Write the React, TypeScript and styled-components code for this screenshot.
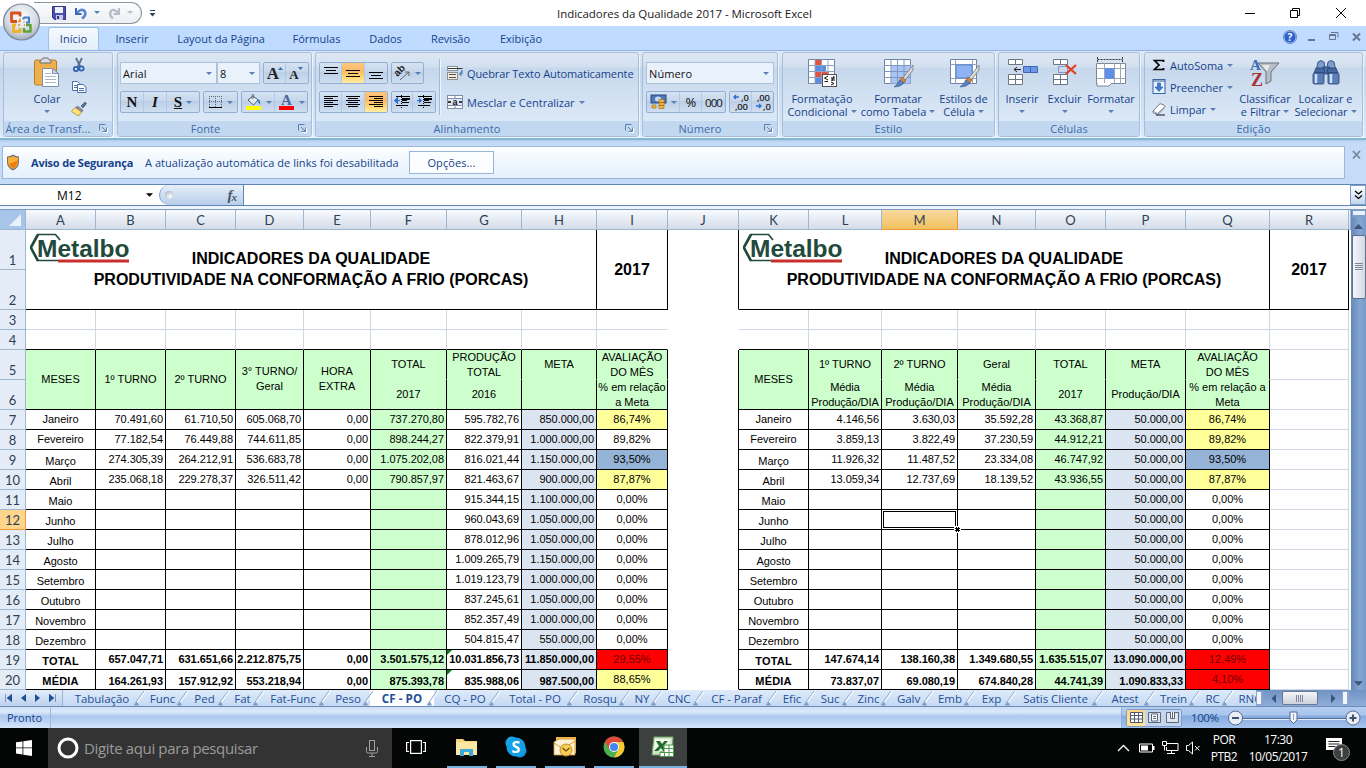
import React from 'react';
import styled, { createGlobalStyle, css } from 'styled-components';

const UI = `"Open Sans", "Noto Sans", sans-serif`;
const ARIAL = `"Liberation Sans", Arial, sans-serif`;
const SERIF = `"Liberation Serif", serif`;

const GlobalStyle = createGlobalStyle`
  * { box-sizing: border-box; }
  body { margin: 0; background: #bfdbff; overflow: hidden; }
  svg { display: block; flex: none; }
`;

const Window = styled.div`
  width: 1366px;
  height: 768px;
  display: flex;
  flex-direction: column;
  font-family: ${UI};
  font-size: 11px;
  color: #15428b;
  position: relative;
  overflow: hidden;
`;

/* ---------- title bar ---------- */
const TitleBar = styled.header`
  height: 26px;
  flex: none;
  background: #fff;
  display: flex;
  align-items: center;
  color: #1a1a1a;
`;
const QuickAccess = styled.div`
  margin-left: 34px;
  margin-top: -1px;
  width: 108px;
  height: 22px;
  border: 1px solid #8d949d;
  border-left: none;
  border-radius: 0 11px 11px 0;
  background: linear-gradient(#fbfcfd, #eceff3);
  display: flex;
  align-items: center;
  padding-left: 18px;
`;
const QaIcon = styled.div<{ $gap: number }>`
  margin-right: ${(p) => p.$gap}px;
`;
const QaMore = styled.div`
  margin-left: 7px;
  width: 12px;
`;
const TitleText = styled.div`
  margin-left: 396px;
  width: 269px;
  padding-top: 1px;
  font-size: 11.5px;
  letter-spacing: -0.05px;
  white-space: nowrap;
`;
const WindowButtons = styled.div`
  margin-left: auto;
  display: flex;
  padding-right: 19px;
  gap: 34px;
`;
const OfficeButton = styled.div`
  position: absolute;
  left: 1px;
  top: 2px;
`;

/* ---------- ribbon tabs ---------- */
const TabRow = styled.nav`
  height: 24px;
  flex: none;
  background: #bfdbff;
  display: flex;
  padding: 1px 0 0 48px;
`;
const RibbonTab = styled.div<{ $w: number; $active?: boolean }>`
  width: ${(p) => p.$w}px;
  height: 23px;
  line-height: 24px;
  text-align: center;
  white-space: nowrap;
  ${(p) =>
    p.$active &&
    css`
      margin-right: 3px;
      background: linear-gradient(#f6faff, #e3edf8);
      border: 1px solid #9ebfe8;
      border-bottom: none;
      border-radius: 3px 3px 0 0;
      line-height: 22px;
    `}
`;
const TabTools = styled.div`
  margin-left: auto;
  padding: 3px 5px 0 0;
  display: flex;
`;
const ToolSlot = styled.div<{ $w: number }>`
  width: ${(p) => p.$w}px;
`;

/* ---------- ribbon ---------- */
const Ribbon = styled.section`
  height: 90px;
  flex: none;
  display: flex;
  padding: 1px 0 0 3px;
  gap: 4px;
  border-top: 1px solid #8db2e3;
  border-bottom: 2px solid #86b5cf;
  background: linear-gradient(#dfe9f5 0, #d0dff0 16px, #c5d6eb 17px, #d9e8f8 84px, #e4f2ff 100%);
`;
const GroupBox = styled.div<{ $w: number; $ml?: number }>`
  width: ${(p) => p.$w}px;
  margin-left: ${(p) => p.$ml || 0}px;
  height: 85px;
  flex: none;
  display: flex;
  flex-direction: column;
  border: 1px solid #a3bfdc;
  border-radius: 3px;
  overflow: hidden;
  background: linear-gradient(#dee8f4 0, #d1dfef 14px, #c7d8ec 15px, #dbe8f7 68px);
  box-shadow: 1px 1px 0 rgba(255, 255, 255, 0.6);
`;
const GroupBody = styled.div`
  height: 68px;
  flex: none;
  display: flex;
`;
const GroupLabel = styled.div`
  flex: 1;
  background: #c1d8f0;
  color: #3e6aaa;
  line-height: 16px;
  text-align: center;
  position: relative;
  letter-spacing: 0.1px;
  white-space: nowrap;
`;
const LabelText = styled.span<{ $pr?: number }>`
  padding-right: ${(p) => p.$pr || 0}px;
`;
const Launcher = styled.div`
  position: absolute;
  right: 4px;
  top: 3px;
`;

const Column = styled.div<{ $pl?: number; $pt?: number; $gap?: number; $ml?: number; $w?: number }>`
  display: flex;
  flex-direction: column;
  width: ${(p) => (p.$w ? p.$w + 'px' : 'auto')};
  margin-left: ${(p) => p.$ml || 0}px;
  padding-left: ${(p) => p.$pl || 0}px;
  padding-top: ${(p) => p.$pt ?? 9}px;
  gap: ${(p) => p.$gap ?? 7}px;
`;
const Row = styled.div<{ $gap?: number }>`
  display: flex;
  align-items: center;
  gap: ${(p) => p.$gap ?? 3}px;
`;
const ButtonSet = styled.div`
  display: flex;
  height: 22px;
  border: 1px solid #94afd1;
  border-radius: 2px;
  background: linear-gradient(#d5e2f1, #c6d7eb 45%, #bccfe7 46%, #cfdff1);
`;
const Btn = styled.div<{ $w: number; $on?: boolean }>`
  width: ${(p) => p.$w}px;
  display: flex;
  align-items: center;
  justify-content: center;
  gap: 4px;
  color: #111;
  border-right: 1px solid #b3c9e3;
  &:last-child { border-right: none; }
  ${(p) => p.$on && css`background: linear-gradient(#fbc77e, #fdb964 40%, #ffd978 75%, #ffeea5);`}
`;
const Glyph = styled.span<{ $size: number; $italic?: boolean; $underline?: boolean }>`
  font: bold ${(p) => p.$size}px ${SERIF};
  font-style: ${(p) => (p.$italic ? 'italic' : 'normal')};
  text-decoration: ${(p) => (p.$underline ? 'underline' : 'none')};
  color: #111;
`;
const Combo = styled.div<{ $w: number }>`
  width: ${(p) => p.$w}px;
  height: 22px;
  background: #e9f1fb;
  border: 1px solid #abc1de;
  display: flex;
  align-items: center;
  justify-content: space-between;
  padding: 0 4px 0 2px;
  color: #111;
  letter-spacing: 0.1px;
`;
const Separator = styled.div`
  width: 2px;
  height: 56px;
  margin: 6px 0 0 3px;
  background: #9bbbe0;
  border-right: 1px solid #ecf3fb;
`;
const SmallItem = styled.div<{ $ls?: number }>`
  display: flex;
  align-items: center;
  height: 22px;
  gap: 4px;
  white-space: nowrap;
  letter-spacing: ${(p) => p.$ls ?? 0}px;
`;
const BigButton = styled.div<{ $w: number }>`
  width: ${(p) => p.$w}px;
  flex: none;
  display: flex;
  flex-direction: column;
  align-items: center;
  padding-top: 4px;
  white-space: nowrap;
`;
const BigLine = styled.div<{ $first?: boolean }>`
  display: flex;
  align-items: center;
  justify-content: center;
  gap: 3px;
  height: 13px;
  line-height: 13px;
  margin-top: ${(p) => (p.$first ? 3 : 0)}px;
`;
const NumText = styled.span<{ $size: number }>`
  font: ${(p) => p.$size}px ${UI};
  letter-spacing: -0.9px;
`;

/* ---------- message bar ---------- */
const MessageArea = styled.div`
  height: 44px;
  flex: none;
  background: linear-gradient(#b4cdec 0, #c5dbf7 3px, #c5dbf7 100%);
  padding: 6px 5px 0 2px;
  display: flex;
  justify-content: space-between;
  align-items: flex-start;
`;
const MessageBar = styled.div`
  width: 1343px;
  height: 33px;
  border: 1px solid #9bb8dc;
  background: linear-gradient(#fdfeff, #e3f0fc);
  display: flex;
  align-items: center;
  padding-left: 3px;
`;
const MessageTitle = styled.b`
  margin-left: 11px;
  width: 114px;
  letter-spacing: -0.2px;
  white-space: nowrap;
`;
const MessageText = styled.span`
  width: 264px;
  letter-spacing: 0.05px;
  white-space: nowrap;
`;
const OptionsButton = styled.div`
  width: 85px;
  height: 23px;
  border: 1px solid #9ab4d4;
  background: #fbfdff;
  text-align: center;
  line-height: 21px;
  letter-spacing: 0.1px;
`;
const MessageClose = styled.div`
  padding-top: 4px;
`;

/* ---------- formula bar ---------- */
const FormulaBar = styled.div`
  height: 22px;
  flex: none;
  border-top: 1px solid #5f84b5;
  border-bottom: 1px solid #5f84b5;
  background: #fff;
  display: flex;
  align-items: center;
`;
const NameBox = styled.div`
  width: 157px;
  display: flex;
  align-items: center;
  color: #000;
  font-size: 12px;
  padding: 0 4px 0 57px;
  justify-content: space-between;
`;
const FxPart = styled.div`
  margin-left: 2px;
  width: 85px;
  height: 20px;
  border-left: 1px solid #7d9dc6;
  border-right: 1px solid #5f84b5;
  border-radius: 10px 0 0 10px;
  background: linear-gradient(#e6eefa, #b8cdea);
  display: flex;
  align-items: center;
  justify-content: space-between;
  padding: 0 7px 0 5px;
`;
const FxDot = styled.div`
  width: 8px;
  height: 8px;
  border-radius: 4px;
  background: radial-gradient(circle at 65% 70%, #fff, #9aa8bc);
`;
const FxText = styled.span`
  font: italic bold 15px ${SERIF};
  color: #47566b;
  letter-spacing: -1px;
  sub { font-size: 11px; vertical-align: -1px; }
`;
const Expand = styled.div`
  margin-left: auto;
  width: 16px;
  height: 20px;
  border: 1px solid #7d9dc6;
  background: linear-gradient(#fff, #c2d5ef);
  display: flex;
  align-items: center;
  justify-content: center;
`;
const FormulaGap = styled.div`
  height: 4px;
  flex: none;
  background: #eef4fc;
  border-bottom: 1px solid #7d9bc0;
`;

/* ---------- sheet ---------- */
const COLS = [70, 70, 70, 68, 67, 76, 75, 75, 71, 71, 70, 73, 76, 78, 70, 80, 84, 79];
const ROWS = [40, 40, 20, 20, 30, 30, ...Array(14).fill(20)];

const SheetArea = styled.div`
  height: 480px;
  flex: none;
  display: flex;
  background: #fff;
`;
const Grid = styled.div`
  position: relative;
  width: 1351px;
  display: grid;
  grid-template-columns: 26px ${COLS.map((c) => c + 'px').join(' ')} 2px;
  grid-template-rows: 20px ${ROWS.map((r) => r + 'px').join(' ')};
  font-family: ${ARIAL};
  font-size: 11px;
  color: #000;
`;
const Corner = styled.div`
  background: #a9c4e9;
  border-right: 1px solid #9eb6ce;
  border-bottom: 1px solid #9eb6ce;
  display: flex;
  align-items: flex-end;
  justify-content: flex-end;
  padding: 0 4px 3px 0;
`;
const ColHead = styled.div<{ $on?: boolean }>`
  background: ${(p) => (p.$on ? 'linear-gradient(#f9d99f, #f1c15f)' : 'linear-gradient(#f8fafd, #d4dce9)')};
  border-right: 1px solid ${(p) => (p.$on ? '#f29536' : '#9eb6ce')};
  border-bottom: 1px solid ${(p) => (p.$on ? '#f29536' : '#9eb6ce')};
  font: 13px/21px Lato, sans-serif;
  color: #2f3f52;
  text-align: center;
  overflow: hidden;
`;
const RowHead = styled.div<{ $on?: boolean; $row: number }>`
  grid-column: 1;
  grid-row: ${(p) => p.$row};
  background: ${(p) => (p.$on ? '#ffd58d' : '#e4ecf7')};
  border-right: 1px solid ${(p) => (p.$on ? '#f29536' : '#9eb6ce')};
  border-bottom: 1px solid ${(p) => (p.$on ? '#f29536' : '#9eb6ce')};
  font: 13px/18px Lato, sans-serif;
  color: #2f3f52;
  display: flex;
  align-items: flex-end;
  justify-content: center;
`;

type CellProps = {
  $c: number; $r: number; $cs?: number; $rs?: number;
  $bg?: string; $align?: string; $bold?: boolean; $low?: boolean; $up?: boolean;
  $right?: string; $bottom?: string; $color?: string; $big?: boolean; $ls?: number;
};
const GRID = '#d0d7e5';
const Cell = styled.div<CellProps>`
  grid-column: ${(p) => p.$c + 1} / span ${(p) => p.$cs || 1};
  grid-row: ${(p) => p.$r + 1} / span ${(p) => p.$rs || 1};
  background: ${(p) => p.$bg || 'transparent'};
  border-right: 1px solid ${(p) => p.$right || '#000'};
  border-bottom: 1px solid ${(p) => p.$bottom || '#000'};
  display: flex;
  align-items: center;
  justify-content: ${(p) => (p.$align === 'right' ? 'flex-end' : 'center')};
  text-align: center;
  padding: ${(p) => (p.$low ? 3 : 0)}px ${(p) => (p.$align === 'right' ? 2 : 0)}px ${(p) => (p.$up ? 2 : 0)}px 0;
  font-weight: ${(p) => (p.$bold ? 'bold' : 'normal')};
  font-size: ${(p) => (p.$big ? 16 : 11)}px;
  line-height: ${(p) => (p.$big ? 21 : 15)}px;
  color: ${(p) => p.$color || '#000'};
  letter-spacing: ${(p) => p.$ls || 0}px;
  white-space: pre;
  min-width: 0;
  position: relative;
`;
const ErrorMark = styled.i`
  position: absolute;
  left: 0;
  top: 0;
  border-top: 5px solid #0a7a1e;
  border-right: 5px solid transparent;
`;
const Logo = styled.div`
  position: absolute;
  left: 4px;
  top: 3px;
`;
const Selection = styled.div`
  grid-column: 14;
  grid-row: 13;
  position: relative;
  margin: 1px 2px 2px 1px;
  border: 1px solid #000;
`;
const Handle = styled.i`
  position: absolute;
  right: -5px;
  bottom: -5px;
  width: 5px;
  height: 5px;
  background: #000;
  border: 1px dotted #fff;
  outline: 1px solid #fff;
`;
const VScroll = styled.div`
  width: 15px;
  background: linear-gradient(90deg, #6488b9, #86a6d2 60%, #7799c9);
  display: flex;
  flex-direction: column;
  align-items: center;
  padding-bottom: 4px;
`;
const SplitBox = styled.div`
  width: 14px;
  height: 7px;
  border: 1px solid #7d9dc6;
  background: #e8f0fb;
  margin-bottom: 7px;
  border-bottom-width: 2px;
`;
const VThumb = styled.div`
  width: 14px;
  height: 64px;
  margin: 6px 0 auto;
  border: 1px solid #5f6f8c;
  border-radius: 2px;
  background: linear-gradient(90deg, #f4f6f9, #d5dae2);
  display: flex;
  align-items: center;
  justify-content: center;
`;

/* ---------- sheet tabs ---------- */
const SheetTabs = styled.div`
  height: 17px;
  flex: none;
  display: flex;
  background: linear-gradient(#e3edf9, #bdd1ec);
  border-bottom: 1px solid #6d8db9;
`;
const TabNav = styled.div`
  width: 63px;
  flex: none;
  display: flex;
  justify-content: space-around;
  align-items: center;
  padding: 0 2px 0 1px;
  border-right: 1px solid #9bb5d8;
`;
const TabStrip = styled.div`
  width: 1193px;
  flex: none;
  display: flex;
  overflow: hidden;
`;
const SheetTab = styled.div<{ $w: number; $on?: boolean }>`
  width: ${(p) => p.$w}px;
  flex: none;
  height: 16px;
  line-height: 17px;
  font-size: 11.5px;
  text-align: center;
  white-space: nowrap;
  position: relative;
  color: #1f4f97;
  font-weight: ${(p) => (p.$on ? 'bold' : 'normal')};
  letter-spacing: ${(p) => (p.$on ? 0.1 : -0.05)}px;
  background: ${(p) => (p.$on ? '#fff' : 'linear-gradient(#deebfa, #c4d9f3)')};
  svg { position: absolute; right: -7px; top: 0; z-index: 1; }
`;
const HScroll = styled.div`
  flex: 1;
  display: flex;
  align-items: center;
  background: linear-gradient(#7093c4, #8fadd8);
`;
const HSplit = styled.div`
  width: 7px;
  height: 14px;
  background: #f2f7fd;
  border: 1px solid #8aa6cf;
  border-right-width: 2px;
`;
const HThumb = styled.div`
  width: 36px;
  height: 14px;
  margin-right: 13px;
  border: 1px solid #6a7890;
  border-radius: 2px;
  background: linear-gradient(#f4f6f9, #ccd2dc);
  display: flex;
  align-items: center;
  justify-content: center;
`;

/* ---------- status bar ---------- */
const StatusBar = styled.div`
  height: 21px;
  flex: none;
  display: flex;
  align-items: center;
  background: linear-gradient(#cfe0f6 0, #dbe9fb 5px, #adc8ec 9px, #b9d3f4 14px, #d6e6fa);
`;
const Ready = styled.div`
  width: 51px;
  height: 20px;
  line-height: 19px;
  padding-left: 7px;
  border-right: 1px solid #9bb8de;
`;
const StatusRight = styled.div`
  margin-left: auto;
  width: 245px;
  height: 21px;
  display: flex;
  align-items: center;
  border-left: 1px solid #8fb0dc;
  padding-left: 4px;
  background: linear-gradient(#b4cdf0 0, #a9c5ec 8px, #86abdf 9px, #a5c4ee);
`;
const ViewSet = styled.div`
  display: flex;
  height: 18px;
  border: 1px solid #7f9cc7;
  border-radius: 2px;
`;
const ViewBtn = styled.div<{ $on?: boolean }>`
  width: 18px;
  display: flex;
  align-items: center;
  justify-content: center;
  background: ${(p) => (p.$on ? 'linear-gradient(#ffd48a, #ffe79b)' : '#c3d6ef')};
`;
const ZoomText = styled.span`
  width: 28px;
  margin: 0 8px 0 9px;
  font-size: 11.5px;
  letter-spacing: -0.4px;
`;

/* ---------- task bar ---------- */
const TaskBar = styled.footer`
  height: 40px;
  flex: none;
  background: #040605;
  display: flex;
  color: #fff;
`;
const StartButton = styled.div`
  width: 48px;
  display: flex;
  align-items: center;
  justify-content: center;
`;
const Search = styled.div`
  width: 344px;
  background: #333;
  display: flex;
  align-items: center;
  padding: 0 14px 0 9px;
  color: #9b9b9b;
  font-size: 15px;
`;
const SearchText = styled.span`
  margin: 0 auto 0 5px;
  letter-spacing: -0.36px;
  white-space: nowrap;
`;
const TaskItem = styled.div<{ $w: number; $open?: boolean; $active?: boolean; $ml?: number }>`
  width: ${(p) => p.$w}px;
  margin-left: ${(p) => p.$ml || 0}px;
  display: flex;
  align-items: center;
  justify-content: center;
  border-bottom: 2px solid ${(p) => (p.$open ? '#76b2e4' : 'transparent')};
  background: ${(p) => (p.$active ? '#3c413f' : 'transparent')};
`;
const Tray = styled.div`
  margin-left: auto;
  display: flex;
  align-items: center;
  font-size: 12px;
  line-height: 17px;
  text-align: center;
`;
const TrayIcon = styled.div<{ $w: number }>`
  width: ${(p) => p.$w}px;
`;
const TrayText = styled.div<{ $w: number }>`
  width: ${(p) => p.$w}px;
  letter-spacing: -0.5px;
  white-space: pre;
`;
const Notice = styled.div`
  width: 43px;
  margin-left: 6px;
  padding-left: 2px;
`;

/* ---------- small drawings ---------- */
const Down = ({ c = '#5b7fb5', w = 6 }: { c?: string; w?: number }) => (
  <svg width={w} height={Math.ceil(w / 2)} viewBox="0 0 6 3"><path d="M0 0h6L3 3z" fill={c} /></svg>
);
const Lines = ({ rows }: { rows: [number, number, number][] }) => (
  <svg width="16" height="16" shapeRendering="crispEdges">
    {rows.map(([x, y, w], i) => <rect key={i} x={x} y={y} width={w} height="1" fill="#000" />)}
  </svg>
);
const LaunchIcon = () => (
  <svg width="9" height="9" fill="none" stroke="#5f7fab">
    <path d="M.5 6.500v-6h6" /><path d="M3 3l4 4M7.500 3.500v4h-4" /><path d="M4 8.500h4.500v-4.500" stroke="#fff" />
  </svg>
);
const PasteIcon = () => (
  <svg width="32" height="32">
    <rect x="3.500" y="3" width="22" height="25" rx="2" fill="#eeb04c" stroke="#b67c2a" />
    <path d="M9 6h11v-2q-2-1-3-3h-5q-1 2-3 3z" fill="#d7dbe0" stroke="#6b6f76" />
    <path d="M11.500 11.500h10l6 5v13h-16z" fill="#fff" stroke="#7c8fae" />
    <path d="M21.500 11.500v5h6z" fill="#cfdcee" stroke="#7c8fae" />
    <path d="M14 16.500h6M14 19.500h11M14 22.500h11M14 25.500h11" stroke="#a9b7cc" />
  </svg>
);
const CutIcon = () => (
  <svg width="16" height="16" fill="none">
    <path d="M5 1l4.500 9M11 1L6.500 10" stroke="#56708f" strokeWidth="1.800" />
    <circle cx="5" cy="12" r="2.200" stroke="#2c5fae" strokeWidth="1.700" /><circle cx="10.500" cy="11.500" r="2.200" stroke="#2c5fae" strokeWidth="1.700" />
  </svg>
);
const CopyIcon = () => (
  <svg width="16" height="16" stroke="#4a6ea9">
    <path d="M1.500 2.500h5l3 2.500v6.500h-8z" fill="#fff" /><path d="M3 6.500h4M3 8.500h4" />
    <path d="M6.500 5.500h5.500l3 2.500v5.500h-8.500z" fill="#fff" /><path d="M8 9.500h5M8 11.500h5" />
  </svg>
);
const BrushIcon = () => (
  <svg width="16" height="16">
    <path d="M10 5l4-4 1.500 1.500-3.500 4.500z" fill="#5d6e96" stroke="#3e4c70" strokeWidth=".6" />
    <path d="M6.500 5l5.500 4-1 2-7-4z" fill="#8d8aa8" stroke="#5c5a78" strokeWidth=".5" />
    <path d="M4 6.500l6.500 4.500-3 4-7-4.500z" fill="#ffe27a" stroke="#b08a2a" strokeWidth=".8" />
  </svg>
);
const BorderIcon = () => (
  <svg width="14" height="14" shapeRendering="crispEdges">
    <path d="M.5 1v11M6.500 1v11M12.500 1v11M0 1.500h13M0 6.500h13" stroke="#5c6b80" strokeDasharray="1 1" /><rect y="12" width="13" height="1" fill="#000" />
  </svg>
);
const FillIcon = () => (
  <svg width="17" height="16">
    <path d="M3 6l5-4 5 4-4.500 5z" fill="#e8edf4" stroke="#4b586d" /><path d="M7 5V1.500q0-1.500 1.500-1v4" fill="none" stroke="#6b7789" />
    <path d="M12 5q4 0 3 6l-2-3z" fill="#3d76c9" /><rect x="1" y="12" width="15" height="4" fill="#ff0" />
  </svg>
);
const FontColorIcon = () => (
  <svg width="17" height="16">
    <text x="8.500" y="11" textAnchor="middle" fontFamily="Liberation Serif" fontWeight="bold" fontSize="15" fill="#44689c">A</text>
    <rect x="1" y="12" width="15" height="4" fill="#f00" />
  </svg>
);
const GrowIcon = ({ s, up }: { s: number; up?: boolean }) => (
  <svg width="18" height="18">
    <text x={up ? 7 : 6} y="15" textAnchor="middle" fontFamily="Liberation Serif" fontWeight="bold" fontSize={s} fill="#222">A</text>
    <path d={up ? 'M12 6h5l-2.500-3z' : 'M10 3h5l-2.500 3z'} fill="#3f6cb4" />
  </svg>
);
const OrientIcon = () => (
  <svg width="17" height="17">
    <text transform="translate(5 12) rotate(-45)" x="-1" y="-1" fontFamily="Liberation Sans" fontWeight="bold" fontSize="10" fill="#222">ab</text>
    <path d="M6 15L15 7M11 7h4v4" fill="none" stroke="#666" />
  </svg>
);
const IndentIcon = ({ flip }: { flip?: boolean }) => (
  <svg width="17" height="16" shapeRendering="crispEdges">
    <path d={flip ? 'M1 6h3M3 4l2 2.500-2 2.500z' : 'M3 6h3M3 4l-2 2.500 2 2.500z'} stroke="#2f6fd0" fill="#2f6fd0" />
    <path d="M2 2.500h14M8 4.500h8M8 6.500h5M8 8.500h7M2 11.500h5M8 11.500h6" stroke="#000" /><path d="M8 4h8v2H8z" /><path d="M7.500 1v13" stroke="#000" strokeDasharray="1 1" />
  </svg>
);
const WrapIcon = () => (
  <svg width="16" height="16">
    <rect x=".5" y="1.500" width="10" height="4" fill="#fff" stroke="#8b8f96" /><path d="M1 3.500h14.500" stroke="#333" />
    <rect x=".5" y="7.500" width="10" height="7" fill="#f4ead8" stroke="#8b8f96" /><path d="M2 9.500h7M2 12.500h7" stroke="#555" />
    <path d="M15 5v4h-2M14.500 6.500l-2 2.500 2 2" fill="none" stroke="#3d6aae" />
  </svg>
);
const MergeIcon = () => (
  <svg width="16" height="16">
    <rect x=".5" y="1.500" width="15" height="13" fill="#fff" stroke="#7d8ea8" /><path d="M.5 4.500h15M.5 11.500h15M8 1.500v3M8 11.500v3" stroke="#7d8ea8" />
    <rect x="1" y="5" width="14" height="6" fill="#dce8f8" /><path d="M1 8h3M12 8h3" stroke="#000" strokeWidth="1.500" />
    <text x="8" y="10.500" textAnchor="middle" fontFamily="Liberation Sans" fontWeight="bold" fontSize="9" fill="#111">a</text>
  </svg>
);
const CurrencyIcon = () => (
  <svg width="17" height="16">
    <rect x="1" y="1" width="15" height="8" fill="#4f78b8" stroke="#27487f" /><ellipse cx="8" cy="5" rx="3" ry="2.500" fill="#c7d9f2" />
    <path d="M2 11h4v3H2zM9 5.500h5v9H9z" fill="#efb83c" stroke="#a8741b" strokeWidth=".7" /><path d="M9 8.500h5M9 11.500h5" stroke="#a8741b" />
  </svg>
);
const DecimalIcon = ({ less }: { less?: boolean }) => (
  <svg width="18" height="18" fontFamily="Open Sans" fontSize="9.500" fontWeight="600" fill="#222">
    {less ? <><text x="3" y="8" textLength="13">,00</text><text x="9" y="17">,0</text><path d="M2 13h5M5 11l2 2-2 2" stroke="#2f6fd0" fill="none" strokeWidth="1.400" /></>
      : <><text x="9" y="8">,0</text><text x="3" y="17" textLength="13">,00</text><path d="M2 4h5M4 2L2 4l2 2" stroke="#2f6fd0" fill="none" strokeWidth="1.400" /></>}
  </svg>
);
const CondIcon = () => (
  <svg width="32" height="32">
    <path d="M2.500 2.500h26v24h-26z" fill="#fff" stroke="#6f86a8" />
    <path d="M9 3h6v5H9zM9 14h14v6H9z" fill="#e4513f" /><path d="M9 8h11v6H9zM9 20h6v6H9z" fill="#5b8ce4" />
    <path d="M2.500 8.500h26M2.500 14.500h26M2.500 20.500h26M9 2.500v24M15.500 2.500v24M22 2.500v24" stroke="#8fa3c0" fill="none" />
    <rect x="16.500" y="17.500" width="14" height="12" fill="#fff" stroke="#555" />
    <path d="M22 19l-3.500 2 3.500 2M18.500 24.500H22M25 21h4M25 23h4M28 19l-2 5M25 25l3 1.500-3 1.500" fill="none" stroke="#111" />
  </svg>
);
const BrushArm = () => (
  <>
    <path d="M31 8L20 22l2.500 2L31 13z" fill="#d9d9d9" stroke="#777" strokeWidth=".8" />
    <path d="M20 20l4 3-2 3-5-2z" fill="#c98748" stroke="#84531f" strokeWidth=".6" /><path d="M18 23l4 3q-3 4-10 4 3-2 6-7z" fill="#5a82c0" stroke="#3b5f9a" strokeWidth=".6" />
  </>
);
const TableIcon = () => (
  <svg width="32" height="32">
    <path d="M2.500 2.500h26v24h-26z" fill="#fff" stroke="#6f86a8" /><path d="M9 8.500h19.500v18H9z" fill="#a9c5f5" />
    <path d="M2.500 8.500h26M2.500 14.500h26M2.500 20.500h26M9 2.500v24M15.500 2.500v24M22 2.500v24" stroke="#7d97bf" fill="none" /><BrushArm />
  </svg>
);
const StylesIcon = () => (
  <svg width="32" height="32">
    <path d="M2.500 2.500h26v24h-26z" fill="#fff" stroke="#6f86a8" /><path d="M2.500 7.500h26M2.500 21.500h26M7.500 2.500v24M24.500 2.500v24" stroke="#8fa3c0" fill="none" />
    <rect x="8" y="8" width="16" height="13" fill="#8fb4f3" stroke="#5b83c9" /><BrushArm />
  </svg>
);
const Block = ({ x, y }: { x: number; y: number }) => (
  <g transform={`translate(${x} ${y})`}><path d="M.5.500h14v10H.5zM.5 5.500h14M7.500.500v10" fill="#fff" stroke="#6d7685" /></g>
);
const InsertIcon = () => (
  <svg width="32" height="32">
    <path d="M2.500 2.500h14v5h-14z" fill="#fff" stroke="#6d7685" /><path d="M9.500 2.500v5" stroke="#6d7685" /><Block x={2} y={17} />
    <path d="M17.500 9.500h14v6h-14z" fill="#6b97e6" stroke="#3e67ad" /><path d="M24.500 9.500v6" stroke="#3e67ad" /><path d="M8 12.500h7M11 10l-3 2.500 3 2.500" stroke="#222" fill="none" />
  </svg>
);
const DeleteIcon = () => (
  <svg width="32" height="32">
    <path d="M4.500 2.500h14v5h-14z" fill="#fff" stroke="#6d7685" /><path d="M11.500 2.500v5" stroke="#6d7685" /><Block x={4} y={17} />
    <path d="M9.500 9.500h9v6h-9z" fill="none" stroke="#355a9c" strokeDasharray="1 1" /><path d="M17 8l10 9M27 8l-10 9" stroke="#e23b23" strokeWidth="2.200" />
  </svg>
);
const FormatIcon = () => (
  <svg width="32" height="32">
    <path d="M2.500 2.500h25M2.500 0v5M27.500 0v5" stroke="#333" strokeDasharray="2 1" fill="none" />
    <path d="M1.500 6.500h29v20h-29z" fill="#fff" stroke="#7c8798" /><path d="M1.500 11.500h29M1.500 21.500h29M9.500 6.500v20M19.500 6.500v20M25.500 6.500v20" stroke="#9aa5b6" fill="none" />
    <rect x="10" y="11" width="9" height="11" fill="#5f8fe6" /><path d="M2 26v3h12l3-3" fill="#fff" stroke="#7c8798" />
  </svg>
);
const SumIcon = () => (
  <svg width="14" height="14"><path d="M11.500 4V2.500H2.500l4.500 4.500-4.500 4.500h9V10" fill="none" stroke="#000" strokeWidth="1.700" /></svg>
);
const FillDownIcon = () => (
  <svg width="14" height="16"><rect x="1" y=".500" width="12" height="14" fill="#eaf2fd" stroke="#34619f" /><path d="M1 2h12" stroke="#34619f" /><path d="M5.500 4h3v4H11l-4 4.500L3 8h2.500z" fill="#3b7bdc" stroke="#2457a8" strokeWidth=".6" /></svg>
);
const EraserIcon = () => (
  <svg width="14" height="14"><path d="M1 9l6-6.500q1-1 2.500-.5l3 1.500q1 1 0 2L7 11.500q-1 1-2.500.5L1.500 11q-1-1-.5-2z" fill="#fff" stroke="#6b7688" /><path d="M1 9l4.500 2.500L12.500 5" fill="none" stroke="#8c97a8" /><path d="M4 13h9" stroke="#111" /></svg>
);
const SortIcon = () => (
  <svg width="32" height="32" fontFamily="Liberation Serif" fontWeight="bold">
    <path d="M9 6h21l-8 9v9l-5 3V15z" fill="#b9bdc4" stroke="#6c7078" /><path d="M13 8h8l-3 6z" fill="#e6e8eb" />
    <text x="1" y="13" fontSize="15" fill="#3d6bb5">A</text><text x="2" y="29" fontSize="18" fill="#a83232">Z</text>
  </svg>
);
const FindIcon = () => (
  <svg width="32" height="32" stroke="#24416f" strokeWidth=".8">
    <path d="M8 5q3-3 6 0l1 5-9 4z" fill="#7d9dcc" /><path d="M18 5q3-3 6 0l2 9-9-4z" fill="#7d9dcc" /><rect x="13" y="10" width="6" height="7" fill="#4f73ad" />
    <path d="M6 11h8l1 5H4z" fill="#45689f" /><path d="M18 11h8l2 5H17z" fill="#45689f" />
    <rect x="3" y="16" width="11" height="11" rx="1.500" fill="#5a7fba" /><rect x="18" y="16" width="11" height="11" rx="1.500" fill="#5a7fba" />
    <path d="M6 17v9M21 17v9" stroke="#cfdff5" strokeWidth="2.500" />
  </svg>
);
const OfficeIcon = () => (
  <svg width="40" height="40">
    <defs><radialGradient id="orb" cx=".5" cy=".35" r=".65"><stop offset="0" stopColor="#fdfdfe" /><stop offset=".65" stopColor="#d5dbe3" /><stop offset="1" stopColor="#a3adbb" /></radialGradient></defs>
    <circle cx="20.500" cy="20" r="18" fill="url(#orb)" stroke="#7b8798" strokeWidth="1.200" />
    <g fill="none" strokeWidth="2.800" strokeLinejoin="round">
      <path d="M19 14.500V11h-8.500v8.500H16" stroke="#d9501e" /><path d="M22.500 15.500h5.500v5h-3M22.500 15.500v2" stroke="#3d7cc9" strokeWidth="2" />
      <path d="M15 23h-2.500v6.500H19V26" stroke="#f0b323" /><path d="M25 23h4.500v6.500H23V26" stroke="#5da03a" strokeWidth="2.400" />
      <path d="M17 19.500h2v-3M19 23h-2M23 20.500v-1M23 23h1" stroke="#e8862a" strokeWidth="1.600" />
    </g>
  </svg>
);
const MetalboLogo = () => (
  <svg width="102" height="32">
    <path d="M30 7L25.500 1.500H8L.8 14.500 8 27.500h20" fill="none" stroke="#1f4a3c" strokeWidth="1.700" />
    <path d="M8 1.500L.8 14.500 8 28" fill="none" stroke="#1f4a3c" strokeWidth="2.600" />
    <text x="7" y="23.500" fontFamily="Liberation Sans" fontWeight="bold" fontSize="24" fill="#1f4a3c" textLength="92.500" lengthAdjust="spacingAndGlyphs">Metalbo</text>
    <rect x="28" y="26.500" width="71" height="3" fill="#c8312b" />
  </svg>
);

/* ---------- sheet data ---------- */
const GREEN = '#ccffcc', BLUE = '#dbe5f1', YELLOW = '#ffff99', STEEL = '#95b3d7', RED = '#ff0000';
const months = ['Janeiro', 'Fevereiro', 'Março', 'Abril', 'Maio', 'Junho', 'Julho', 'Agosto', 'Setembro', 'Outubro', 'Novembro', 'Dezembro', 'TOTAL', 'MÉDIA'];
const left: string[][] = [
  ['70.491,60', '61.710,50', '605.068,70', '0,00', '737.270,80', '595.782,76', '850.000,00', '86,74%'],
  ['77.182,54', '76.449,88', '744.611,85', '0,00', '898.244,27', '822.379,91', '1.000.000,00', '89,82%'],
  ['274.305,39', '264.212,91', '536.683,78', '0,00', '1.075.202,08', '816.021,44', '1.150.000,00', '93,50%'],
  ['235.068,18', '229.278,37', '326.511,42', '0,00', '790.857,97', '821.463,67', '900.000,00', '87,87%'],
  ['', '', '', '', '', '915.344,15', '1.100.000,00', '0,00%'],
  ['', '', '', '', '', '960.043,69', '1.050.000,00', '0,00%'],
  ['', '', '', '', '', '878.012,96', '1.050.000,00', '0,00%'],
  ['', '', '', '', '', '1.009.265,79', '1.150.000,00', '0,00%'],
  ['', '', '', '', '', '1.019.123,79', '1.000.000,00', '0,00%'],
  ['', '', '', '', '', '837.245,61', '1.050.000,00', '0,00%'],
  ['', '', '', '', '', '852.357,49', '1.000.000,00', '0,00%'],
  ['', '', '', '', '', '504.815,47', '550.000,00', '0,00%'],
  ['657.047,71', '631.651,66', '2.212.875,75', '0,00', '3.501.575,12', '10.031.856,73', '11.850.000,00', '29,55%'],
  ['164.261,93', '157.912,92', '553.218,94', '0,00', '875.393,78', '835.988,06', '987.500,00', '88,65%'],
];
const blankRight = ['', '', '', '', '50.000,00', '0,00%'];
const right: string[][] = [
  ['4.146,56', '3.630,03', '35.592,28', '43.368,87', '50.000,00', '86,74%'],
  ['3.859,13', '3.822,49', '37.230,59', '44.912,21', '50.000,00', '89,82%'],
  ['11.926,32', '11.487,52', '23.334,08', '46.747,92', '50.000,00', '93,50%'],
  ['13.059,34', '12.737,69', '18.139,52', '43.936,55', '50.000,00', '87,87%'],
  ...Array(8).fill(blankRight),
  ['147.674,14', '138.160,38', '1.349.680,55', '1.635.515,07', '13.090.000,00', '12,49%'],
  ['73.837,07', '69.080,19', '674.840,28', '44.741,39', '1.090.833,33', '4,10%'],
];
const leftPct = [YELLOW, '', STEEL, YELLOW, '', '', '', '', '', '', '', '', RED, YELLOW];
const rightPct = [YELLOW, YELLOW, STEEL, YELLOW, '', '', '', '', '', '', '', '', RED, RED];

function DataBlock({ start, rows, green, blue, pct }: { start: number; rows: string[][]; green: number; blue: number; pct: string[] }) {
  return (
    <>
      {rows.map((row, i) => (
        <React.Fragment key={i}>
          <Cell $c={start} $r={7 + i} $low={i > 1} $bold={i > 11} $ls={i > 11 ? 0.2 : 0}>{months[i]}</Cell>
          {row.map((v, j) => {
            const last = j === row.length - 1;
            return (
              <Cell
                key={j}
                $c={start + 1 + j}
                $r={7 + i}
                $align={last ? 'center' : 'right'}
                $bold={!last && i > 11}
                $low={!last && i === 13}
                $bg={last ? pct[i] : j === green ? GREEN : j === blue ? BLUE : ''}
                $color={last && pct[i] === RED ? '#6e0000' : '#000'}
                $ls={last ? 0 : -0.05}
              >
                {start === 1 && j === 5 && i > 11 && <ErrorMark />}
                {v}
              </Cell>
            );
          })}
        </React.Fragment>
      ))}
    </>
  );
}

const title = 'INDICADORES DA QUALIDADE\nPRODUTIVIDADE NA CONFORMAÇÃO A FRIO (PORCAS)';
const gridCols = [1, 2, 3, 4, 5, 6, 7, 8, 9, 11, 12, 13, 14, 15, 16, 17, 18];

function Sheet() {
  return (
    <Grid>
      <Corner><svg width="12" height="12"><path d="M12 0v12H0z" fill="#e9f1fb" /></svg></Corner>
      {'ABCDEFGHIJKLMNOPQR'.split('').map((l) => <ColHead key={l} $on={l === 'M'}>{l}</ColHead>)}
      <ColHead />
      {ROWS.map((_, i) => <RowHead key={i} $on={i === 11} $row={i + 2}>{i + 1}</RowHead>)}

      <Cell $c={1} $r={1} $cs={8} $rs={2} $bold $big $up>{title}<Logo><MetalboLogo /></Logo></Cell>
      <Cell $c={9} $r={1} $rs={2} $bold $big>2017</Cell>
      <Cell $c={10} $r={1} $rs={2} $bottom="transparent" />
      <Cell $c={11} $r={1} $cs={7} $rs={2} $bold $big $up>{title}<Logo><MetalboLogo /></Logo></Cell>
      <Cell $c={18} $r={1} $rs={2} $bold $big>2017</Cell>

      {[3, 4].map((r) => gridCols.map((c) => (
        <Cell key={`${r}-${c}`} $c={c} $r={r} $right={c === 9 ? 'transparent' : GRID} $bottom={r === 4 && c !== 18 ? '#000' : GRID} />
      )))}
      <Cell $c={10} $r={5} $rs={16} $bottom="transparent" />
      {ROWS.slice(4).map((_, i) => <Cell key={i} $c={18} $r={5 + i} $right={GRID} $bottom={GRID} />)}

      <Cell $c={1} $r={5} $rs={2} $bg={GREEN}>MESES</Cell>
      <Cell $c={2} $r={5} $rs={2} $bg={GREEN}>1º TURNO</Cell>
      <Cell $c={3} $r={5} $rs={2} $bg={GREEN}>2º TURNO</Cell>
      <Cell $c={4} $r={5} $rs={2} $bg={GREEN} $up>{'3° TURNO/\nGeral'}</Cell>
      <Cell $c={5} $r={5} $rs={2} $bg={GREEN} $up>{'HORA\nEXTRA'}</Cell>
      {[[6, 'TOTAL', '2017'], [7, 'PRODUÇÃO\nTOTAL', '2016'], [8, 'META', ''], [9, 'AVALIAÇÃO\nDO MÊS', '% em relação\na Meta'],
        [12, '1º TURNO', 'Média\nProdução/DIA'], [13, '2º TURNO', 'Média\nProdução/DIA'], [14, 'Geral', 'Média\nProdução/DIA'],
        [15, 'TOTAL', '2017'], [16, 'META', 'Produção/DIA'], [17, 'AVALIAÇÃO\nDO MÊS', '% em relação a\nMeta']].map(([c, a, b]) => (
        <React.Fragment key={c}>
          <Cell $c={c as number} $r={5} $bg={GREEN} $bottom={GREEN}>{a}</Cell>
          <Cell $c={c as number} $r={6} $bg={GREEN} $ls={c === 12 ? -0.1 : 0}>{b}</Cell>
        </React.Fragment>
      ))}
      <Cell $c={11} $r={5} $rs={2} $bg={GREEN}>MESES</Cell>

      <DataBlock start={1} rows={left} green={4} blue={6} pct={leftPct} />
      <DataBlock start={11} rows={right} green={3} blue={4} pct={rightPct} />
      <Selection><Handle /></Selection>
    </Grid>
  );
}

function Group({ w, ml, label, launch, pr, children }: { w: number; ml?: number; label: string; launch?: boolean; pr?: number; children: React.ReactNode }) {
  return (
    <GroupBox $w={w} $ml={ml}>
      <GroupBody>{children}</GroupBody>
      <GroupLabel><LabelText $pr={pr}>{label}</LabelText>{launch && <Launcher><LaunchIcon /></Launcher>}</GroupLabel>
    </GroupBox>
  );
}
function Big({ w, icon, a, b }: { w: number; icon: React.ReactNode; a: string; b?: string }) {
  return (
    <BigButton $w={w}>
      {icon}
      <BigLine $first>{a}</BigLine>
      <BigLine>{b}<Down /></BigLine>
    </BigButton>
  );
}

const sheetTabs: [string, number][] = [
  ['Tabulação', 78], ['Func', 43], ['Ped', 41], ['Fat', 35], ['Fat-Func', 66], ['Peso', 44], ['CF - PO', 64], ['CQ - PO', 62], ['Total - PO', 78],
  ['Rosqu', 52], ['NY', 32], ['CNC', 42], ['CF - Paraf', 73], ['Efic', 38], ['Suc', 38], ['Zinc', 39], ['Galv', 41], ['Emb', 42], ['Exp', 41],
  ['Satis Cliente', 87], ['Atest', 52], ['Trein', 45], ['RC', 33], ['RNC', 42],
];

export default function App() {
  return (
    <Window>
      <GlobalStyle />
      <TitleBar>
        <QuickAccess>
          <QaIcon $gap={8}>
            <svg width="14" height="14"><path d="M.500.500h13v13h-11l-2-2z" fill="#4a50b4" stroke="#2e3389" /><rect x="3" y="1" width="8" height="6" fill="#eef1fa" /><rect x="4" y="9" width="7" height="5" fill="#c3c9e6" /><rect x="5" y="10" width="2" height="3" fill="#2e3389" /></svg>
          </QaIcon>
          <QaIcon $gap={6}>
            <svg width="14" height="14"><path d="M2 2v6h5.500" fill="none" stroke="#3f66b5" strokeWidth="2" /><path d="M3 7q4-5 7.500-2 2.500 4-2.500 7.500" fill="none" stroke="#5b85cf" strokeWidth="2.600" /></svg>
          </QaIcon>
          <QaIcon $gap={8}><Down /></QaIcon>
          <QaIcon $gap={6}>
            <svg width="13" height="14"><path d="M11 2v6H5.500" fill="none" stroke="#b6bdc7" strokeWidth="2" /><path d="M10 7Q6 2 3 5q-2.500 4 2 7.500" fill="none" stroke="#b6bdc7" strokeWidth="2.400" /></svg>
          </QaIcon>
          <Down c="#b6bdc7" />
        </QuickAccess>
        <QaMore><svg width="7" height="7"><path d="M1 .500h5" stroke="#33415c" /><path d="M.500 3h6L3.500 6.500z" fill="#33415c" /></svg></QaMore>
        <TitleText>Indicadores da Qualidade 2017 - Microsoft Excel</TitleText>
        <WindowButtons>
          <svg width="11" height="12"><path d="M0 6.500h10" stroke="#000" /></svg>
          <svg width="11" height="12" fill="none" stroke="#000"><path d="M.500 3.500h7v7h-7zM2.500 3.500v-2h7v7h-2" /></svg>
          <svg width="12" height="12"><path d="M1 1l10 10M11 1L1 11" stroke="#000" /></svg>
        </WindowButtons>
      </TitleBar>
      <OfficeButton><OfficeIcon /></OfficeButton>
      <TabRow>
        <RibbonTab $w={51} $active>Início</RibbonTab>
        <RibbonTab $w={60}>Inserir</RibbonTab>
        <RibbonTab $w={118}>Layout da Página</RibbonTab>
        <RibbonTab $w={73}>Fórmulas</RibbonTab>
        <RibbonTab $w={65}>Dados</RibbonTab>
        <RibbonTab $w={65}>Revisão</RibbonTab>
        <RibbonTab $w={76}>Exibição</RibbonTab>
        <TabTools>
          <ToolSlot $w={25}><svg width="14" height="14"><circle cx="7" cy="7" r="6.300" fill="#2b62cf" stroke="#fff" /><circle cx="7" cy="7" r="6.600" fill="none" stroke="#3c66ad" strokeWidth=".7" /><text x="7" y="11" textAnchor="middle" fontFamily="Open Sans" fontWeight="bold" fontSize="10" fill="#fff">?</text></svg></ToolSlot>
          <ToolSlot $w={21}><svg width="8" height="14"><path d="M0 10h7" stroke="#66778f" strokeWidth="2" /></svg></ToolSlot>
          <ToolSlot $w={23}><svg width="10" height="12" fill="none" stroke="#66778f"><path d="M.500 4.500h6v5h-6zM2 2.500h7v5M.500 5.500h6" /></svg></ToolSlot>
          <svg width="9" height="14"><path d="M1 3.500l7 7M8 3.500l-7 7" stroke="#66778f" strokeWidth="2" /></svg>
        </TabTools>
      </TabRow>
      <Ribbon>
        <Group w={110} label="Área de Transf..." launch pr={20}>
          <BigButton $w={86}>
            <PasteIcon />
            <BigLine $first>Colar</BigLine>
            <BigLine><Down /></BigLine>
          </BigButton>
          <Column $pt={4} $gap={6} $ml={-19}>
            <CutIcon /><CopyIcon /><BrushIcon />
          </Column>
        </Group>
        <Group w={195} label="Fonte" launch pr={18}>
          <Column $pl={2}>
            <Row>
              <Row $gap={0}><Combo $w={97}>Arial<Down /></Combo><Combo $w={43}>8<Down /></Combo></Row>
              <ButtonSet><Btn $w={22}><GrowIcon s={17} up /></Btn><Btn $w={22}><GrowIcon s={13} /></Btn></ButtonSet>
            </Row>
            <Row>
              <ButtonSet><Btn $w={23}><Glyph $size={15}>N</Glyph></Btn><Btn $w={23}><Glyph $size={15} $italic>I</Glyph></Btn><Btn $w={32}><Glyph $size={15} $underline>S</Glyph><Down /></Btn></ButtonSet>
              <ButtonSet><Btn $w={33}><BorderIcon /><Down /></Btn></ButtonSet>
              <ButtonSet><Btn $w={33}><FillIcon /><Down /></Btn><Btn $w={32}><FontColorIcon /><Down /></Btn></ButtonSet>
            </Row>
          </Column>
        </Group>
        <Group w={324} ml={-1} label="Alinhamento" launch pr={20}>
          <Column $pl={3}>
            <Row>
              <ButtonSet>
                <Btn $w={22}><Lines rows={[[1, 2, 14], [3, 5, 10], [1, 8, 14]]} /></Btn>
                <Btn $w={23} $on><Lines rows={[[1, 5, 14], [3, 8, 10], [1, 11, 14]]} /></Btn>
                <Btn $w={22}><Lines rows={[[1, 7, 14], [3, 10, 10], [1, 13, 14]]} /></Btn>
              </ButtonSet>
              <ButtonSet><Btn $w={31}><OrientIcon /><Down /></Btn></ButtonSet>
            </Row>
            <Row>
              <ButtonSet>
                <Btn $w={22}><Lines rows={[[1, 2, 14], [1, 4, 9], [1, 6, 14], [1, 8, 9], [1, 10, 14], [1, 12, 9]]} /></Btn>
                <Btn $w={23}><Lines rows={[[1, 2, 14], [3, 4, 10], [1, 6, 14], [3, 8, 10], [1, 10, 14], [3, 12, 10]]} /></Btn>
                <Btn $w={22} $on><Lines rows={[[1, 2, 14], [6, 4, 9], [1, 6, 14], [6, 8, 9], [1, 10, 14], [6, 12, 9]]} /></Btn>
              </ButtonSet>
              <ButtonSet><Btn $w={21}><IndentIcon /></Btn><Btn $w={22}><IndentIcon flip /></Btn></ButtonSet>
            </Row>
          </Column>
          <Separator />
          <Column $pl={6}>
            <SmallItem $ls={-0.1}><WrapIcon />Quebrar Texto Automaticamente</SmallItem>
            <SmallItem><MergeIcon />Mesclar e Centralizar<Down /></SmallItem>
          </Column>
        </Group>
        <Group w={136} ml={-1} label="Número" launch pr={20}>
          <Column $pl={3}>
            <Combo $w={128}>Número<Down /></Combo>
            <Row>
              <ButtonSet><Btn $w={33}><CurrencyIcon /><Down /></Btn><Btn $w={22}><NumText $size={13}>%</NumText></Btn><Btn $w={23}><NumText $size={11.5}>000</NumText></Btn></ButtonSet>
              <ButtonSet><Btn $w={22}><DecimalIcon /></Btn><Btn $w={21}><DecimalIcon less /></Btn></ButtonSet>
            </Row>
          </Column>
        </Group>
        <Group w={213} label="Estilo">
          <Column $pl={2} $pt={0}><Row $gap={0}>
            <Big w={74} icon={<CondIcon />} a="Formatação" b="Condicional" />
            <Big w={78} icon={<TableIcon />} a="Formatar" b="como Tabela" />
            <Big w={53} icon={<StylesIcon />} a="Estilos de" b="Célula" />
          </Row></Column>
        </Group>
        <Group w={142} ml={-1} label="Células">
          <Column $pl={2} $pt={0}><Row $gap={0}>
            <Big w={42} icon={<InsertIcon />} a="Inserir" />
            <Big w={43} icon={<DeleteIcon />} a="Excluir" />
            <Big w={50} icon={<FormatIcon />} a="Formatar" />
          </Row></Column>
        </Group>
        <Group w={219} label="Edição">
          <Column $pl={7} $pt={1} $gap={0} $w={90}>
            <SmallItem><SumIcon />AutoSoma<Down /></SmallItem>
            <SmallItem><FillDownIcon />Preencher<Down /></SmallItem>
            <SmallItem><EraserIcon />Limpar<Down /></SmallItem>
          </Column>
          <Big w={60} icon={<SortIcon />} a="Classificar" b="e Filtrar" />
          <Big w={61} icon={<FindIcon />} a="Localizar e" b="Selecionar" />
        </Group>
      </Ribbon>
      <MessageArea>
        <MessageBar>
          <svg width="14" height="17"><path d="M7 .500q3 2 6 2v6q0 5-6 8-6-3-6-8v-6q3 0 6-2z" fill="#6d727b" /><path d="M7 2q2.500 1.500 5 1.600v5q0 4-5 6.500-5-2.500-5-6.500v-5Q4.500 3.500 7 2z" fill="#f9b233" /><path d="M2.500 9q4 1 9-3v3q-1 4-4.500 5.800Q3.500 13 2.500 9z" fill="#ee8012" /></svg>
          <MessageTitle>Aviso de Segurança</MessageTitle>
          <MessageText>A atualização automática de links foi desabilitada</MessageText>
          <OptionsButton>Opções...</OptionsButton>
        </MessageBar>
        <MessageClose><svg width="9" height="10"><path d="M1 1l7 7.500M8 1L1 8.500" stroke="#75869f" strokeWidth="1.800" /></svg></MessageClose>
      </MessageArea>
      <FormulaBar>
        <NameBox>M12<Down c="#000" w={7} /></NameBox>
        <FxPart><FxDot /><FxText>f<sub>x</sub></FxText></FxPart>
        <Expand><svg width="9" height="10" fill="none" stroke="#000" strokeWidth="1.300"><path d="M1 1l3.500 3L8 1M1 5.500l3.500 3L8 5.500" /></svg></Expand>
      </FormulaBar>
      <FormulaGap />
      <SheetArea>
        <Sheet />
        <VScroll>
          <SplitBox />
          <svg width="9" height="5"><path d="M0 5h9L4.500 0z" fill="#3d5377" /></svg>
          <VThumb><svg width="8" height="8"><path d="M0 .500h8M0 2.500h8M0 4.500h8M0 6.500h8" stroke="#7c8798" /></svg></VThumb>
          <Down c="#3d5377" w={9} />
        </VScroll>
      </SheetArea>
      <SheetTabs>
        <TabNav>
          <svg width="7" height="8"><path d="M.500 0v8M7 0v8L2 4z" fill="#1f4f97" stroke="#1f4f97" strokeWidth=".5" /></svg>
          <svg width="5" height="8"><path d="M5 0v8L0 4z" fill="#1f4f97" /></svg>
          <svg width="5" height="8"><path d="M0 0v8l5-4z" fill="#1f4f97" /></svg>
          <svg width="7" height="8"><path d="M6.500 0v8M0 0v8l5-4z" fill="#1f4f97" stroke="#1f4f97" strokeWidth=".5" /></svg>
        </TabNav>
        <TabStrip>
          {sheetTabs.map(([t, w]) => (
            <SheetTab key={t} $w={w} $on={t === 'CF - PO'}>{t}
              <svg width="14" height="16"><path d="M1 15L11 1" stroke="#fff" strokeWidth="1.500" /><path d="M0 15L10 1" stroke="#87a5cf" /><path d="M0 15.500l3-4 2 4z" fill="#7d9bc6" /></svg>
            </SheetTab>
          ))}
        </TabStrip>
        <HScroll>
          <HSplit />
          <svg width="19" height="9"><path d="M13 0v9L8.500 4.500z" fill="#3d5377" /></svg>
          <HThumb><svg width="8" height="7"><path d="M.500 0v7M2.500 0v7M4.500 0v7M6.500 0v7" stroke="#7c8798" /></svg></HThumb>
          <svg width="11" height="9"><path d="M0 0v9l4.500-4.500z" fill="#3d5377" /></svg>
          <HSplit />
        </HScroll>
      </SheetTabs>
      <StatusBar>
        <Ready>Pronto</Ready>
        <StatusRight>
          <ViewSet>
            <ViewBtn $on><svg width="13" height="11"><path d="M.500.500h12v10H.500zM.500 3.500h12M.500 7h12M4.500.500v10M8.500.500v10" fill="#fff" stroke="#4e5a6e" /></svg></ViewBtn>
            <ViewBtn><svg width="13" height="11"><path d="M.500.500h12v10H.500z" fill="#dfe5ee" stroke="#5b6679" /><path d="M3.500 2h6v7h-6zM5 4.500h3M5 6.500h3" fill="#fff" stroke="#5b6679" /></svg></ViewBtn>
            <ViewBtn><svg width="13" height="11"><path d="M.500.500h12v10H.500z" fill="#dfe5ee" stroke="#5b6679" /><path d="M4.500 0v6.500h4V0M6.500 0v6" fill="#fff" stroke="#5b6679" /></svg></ViewBtn>
          </ViewSet>
          <ZoomText>100%</ZoomText>
          <svg width="136" height="18">
            <path d="M16 9.500h104" stroke="#4d6a99" /><path d="M16 10.500h104" stroke="#e4eefb" />
            <circle cx="8.500" cy="9" r="7" fill="#e9eef6" stroke="#566b8e" /><path d="M5 9h7" stroke="#41506a" strokeWidth="2" />
            <circle cx="126" cy="9" r="7" fill="#e9eef6" stroke="#566b8e" /><path d="M122.500 9h7M126 5.500v7" stroke="#41506a" strokeWidth="2" />
            <path d="M63 3h7v8l-3.500 3.500L63 11z" fill="#eef3fa" stroke="#566b8e" /><path d="M66.500 5v6" stroke="#8fa5c8" />
          </svg>
        </StatusRight>
      </StatusBar>
      <TaskBar>
        <StartButton><svg width="16" height="16" fill="#fff"><path d="M0 2.300L6.500 1.400V7.500H0zM7.300 1.300L16 0V7.500H7.300zM0 8.300H6.500V14.500L0 13.600zM7.300 8.300H16V16L7.300 14.700z" /></svg></StartButton>
        <Search>
          <svg width="22" height="22"><circle cx="11" cy="11" r="9" fill="none" stroke="#fff" strokeWidth="3" /></svg>
          <SearchText>Digite aqui para pesquisar</SearchText>
          <svg width="12" height="17" fill="none" stroke="#a0a0a0"><rect x="3.500" y=".500" width="5" height="10" /><path d="M.500 7v4.500q0 1.500 1.500 1.500h8q1.500 0 1.500-1.500V7M6 13v3.500M3 16.500h6" /></svg>
        </Search>
        <TaskItem $w={48}><svg width="20" height="16" fill="none" stroke="#fff" strokeWidth="1.200"><rect x="4.600" y="1.600" width="10.800" height="12.800" /><path d="M3 3.500H.600v9H3M17 3.500h2.400v9H17" /></svg></TaskItem>
        <TaskItem $w={40} $ml={7} $open>
          <svg width="22" height="20"><path d="M0 2h7l2 2h12v14H0z" fill="#f6d57a" /><path d="M0 5h21v13H0z" fill="#fbe6a2" /><path d="M4 19v-7h13v7h-4v-4H8v4z" fill="#3fa9dc" /></svg>
        </TaskItem>
        <TaskItem $w={40} $ml={9} $open>
          <svg width="22" height="22"><circle cx="7" cy="7" r="6.500" fill="#1ba5e8" /><circle cx="15" cy="15" r="6.500" fill="#1590d8" /><circle cx="11" cy="11" r="9.500" fill="#12a0e6" /><text x="11" y="16.500" textAnchor="middle" fontFamily="Open Sans" fontWeight="bold" fontSize="16" fill="#fff">S</text></svg>
        </TaskItem>
        <TaskItem $w={40} $ml={9} $open>
          <svg width="24" height="22"><path d="M3 1h20v16H3z" fill="#f3b54a" /><path d="M1 6l5-3h16v16H1z" fill="#fdf1d6" stroke="#d59b35" strokeWidth=".8" /><path d="M1 7l9 6 12-8" fill="none" stroke="#d59b35" /><circle cx="13" cy="14" r="6" fill="#f7cf55" stroke="#c28d22" /><path d="M9.500 12l3.500 3 3.500-3" fill="none" stroke="#6b4c10" strokeWidth="1.300" /></svg>
        </TaskItem>
        <TaskItem $w={40} $ml={9} $open>
          <svg width="22" height="22"><circle cx="11" cy="11" r="10.500" fill="#4caf50" /><path d="M11 11L1.900 5.750A10.500 10.500 0 0 1 20.100 5.750z" fill="#e04a3a" /><path d="M11 11V6h9.200A10.500 10.500 0 0 1 11 21.500l4.500-8z" fill="#fbc934" /><path d="M1.900 5.750L6.500 13.500 11 11V6z" fill="#e04a3a" /><circle cx="11" cy="11" r="5" fill="#fff" /><circle cx="11" cy="11" r="4" fill="#4285f4" /></svg>
        </TaskItem>
        <TaskItem $w={48} $ml={5} $open $active>
          <svg width="24" height="22"><path d="M3 1h19l-1 18H1z" fill="#cfe6c6" stroke="#6fa262" /><path d="M4 3h15v12H2.500z" fill="#eef7ea" /><path d="M5 5h4l2 3 2.500-3H17l-4.500 5L16 15h-4l-2-3-3 3H3l5-5z" fill="#226b2a" /><path d="M13 9h9.500v11.500H9V16h4z" fill="#fff" stroke="#4d9a48" /><path d="M13 12.500h9.500M9 16.500h13.500M13.500 16v4.500M18 9v11.500" stroke="#4d9a48" /></svg>
        </TaskItem>
        <Tray>
          <TrayIcon $w={22}><svg width="13" height="8" fill="none" stroke="#fff" strokeWidth="1.300"><path d="M1 7l5.500-5.500L12 7" /></svg></TrayIcon>
          <TrayIcon $w={23}><svg width="16" height="10"><path d="M.500 1h13v8H.500z" fill="none" stroke="#fff" /><rect x="2" y="2.500" width="7" height="5" fill="#fff" /><rect x="14" y="3" width="1.500" height="4" fill="#fff" /></svg></TrayIcon>
          <TrayIcon $w={24}><svg width="17" height="14" fill="none" stroke="#fff"><path d="M5 2.500h11v7H4.500V6M.500.500h4v4h-4zM2.500 4.500v5M9.500 9.500v3M5 12.500h8" /></svg></TrayIcon>
          <TrayIcon $w={23}><svg width="15" height="14" fill="none" stroke="#fff"><path d="M.500 4.500h2L6.500 1v12l-4-3.500h-2zM9 5l4.500 4.500M13.500 5L9 9.500" /></svg></TrayIcon>
          <TrayText $w={30}>{'POR\nPTB2'}</TrayText>
          <TrayText $w={78}>{'17:30\n10/05/2017'}</TrayText>
          <Notice><svg width="28" height="26"><path d="M1 3h16v12h-3v4l-4-4H1z" fill="#fff" /><path d="M3.500 6.500h11M3.500 9h11M3.500 11.500h7" stroke="#222" /><circle cx="16.500" cy="17.500" r="8" fill="#3d3f40" stroke="#8b8b8b" /><text x="16.500" y="22" textAnchor="middle" fontFamily="Open Sans" fontSize="12" fill="#fff">1</text></svg></Notice>
        </Tray>
      </TaskBar>
    </Window>
  );
}
